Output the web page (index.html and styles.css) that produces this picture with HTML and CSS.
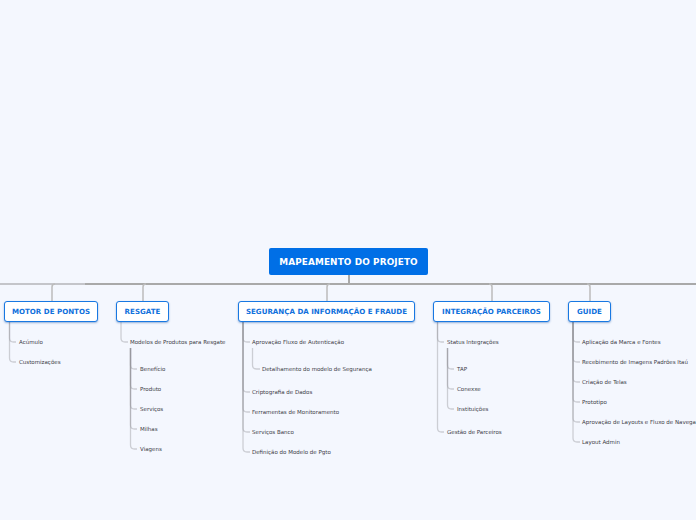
FILE: index.html
```html
<!DOCTYPE html>
<html lang="pt">
<head>
<meta charset="utf-8">
<title>Mapeamento do Projeto</title>
<link rel="stylesheet" href="styles.css">
</head>
<body>
<main class="map">
  <svg class="links" width="696" height="520" viewBox="0 0 696 520" fill="none" aria-hidden="true">
    <path class="trunk-edge" d="M0 284H696"/>
    <path class="trunk" d="M349 275V284M85 284H696"/>
    <g class="stem">
      <path d="M52 301V287Q52 284 55 284"/>
      <path d="M143 301V287Q143 284 146 284"/>
      <path d="M327 301V287Q327 284 330 284"/>
      <path d="M492 301V287Q492 284 489 284"/>
      <path d="M590 301V287Q590 284 587 284"/>
    </g>
    <g class="rail">
      <path d="M9.5 321V338Q9.5 342 13.5 342H16"/>
      <path d="M9.5 321V358Q9.5 362 13.5 362H16"/>

      <path d="M121 321V338Q121 342 125 342H128"/>
      <path d="M130.5 348V365Q130.5 369 134.5 369H137"/>
      <path d="M130.5 348V385Q130.5 389 134.5 389H137"/>
      <path d="M130.5 348V405Q130.5 409 134.5 409H137"/>
      <path d="M130.5 348V425Q130.5 429 134.5 429H137"/>
      <path d="M130.5 348V445Q130.5 449 134.5 449H137"/>

      <path d="M243 321V338Q243 342 247 342H250"/>
      <path d="M243 321V388Q243 392 247 392H250"/>
      <path d="M243 321V408Q243 412 247 412H250"/>
      <path d="M243 321V428Q243 432 247 432H250"/>
      <path d="M243 321V448Q243 452 247 452H250"/>
      <path d="M252.5 348V365Q252.5 369 256.5 369H260"/>

      <path d="M437.5 321V338Q437.5 342 441.5 342H444"/>
      <path d="M437.5 321V428Q437.5 432 441.5 432H444"/>
      <path d="M447.5 348V365Q447.5 369 451.5 369H454"/>
      <path d="M447.5 348V385Q447.5 389 451.5 389H454"/>
      <path d="M447.5 348V405Q447.5 409 451.5 409H454"/>

      <path d="M573 321V338Q573 342 577 342H580"/>
      <path d="M573 321V358Q573 362 577 362H580"/>
      <path d="M573 321V378Q573 382 577 382H580"/>
      <path d="M573 321V398Q573 402 577 402H580"/>
      <path d="M573 321V418Q573 422 577 422H580"/>
      <path d="M573 321V438Q573 442 577 442H580"/>
    </g>
  </svg>

  <h1 class="root">MAPEAMENTO DO PROJETO</h1>

  <div class="branches">
    <section class="branch b-motor">
      <h2 class="topic">MOTOR DE PONTOS</h2>
      <ul class="list">
        <li>Acúmulo</li>
        <li>Customizações</li>
      </ul>
    </section>
    <section class="branch b-resgate">
      <h2 class="topic">RESGATE</h2>
      <ul class="list">
        <li>Modelos de Produtos para Resgate
          <ul class="sub">
            <li>Benefício</li>
            <li>Produto</li>
            <li>Serviços</li>
            <li>Milhas</li>
            <li>Viagens</li>
          </ul>
        </li>
      </ul>
    </section>
    <section class="branch b-seg">
      <h2 class="topic">SEGURANÇA DA INFORMAÇÃO E FRAUDE</h2>
      <ul class="list">
        <li>Aprovação Fluxo de Autenticação
          <ul class="sub">
            <li>Detalhamento do modelo de Segurança</li>
          </ul>
        </li>
        <li>Criptografia de Dados</li>
        <li>Ferramentas de Monitoramento</li>
        <li>Serviços Banco</li>
        <li>Definição do Modelo de Pgto</li>
      </ul>
    </section>
    <section class="branch b-int">
      <h2 class="topic">INTEGRAÇÃO PARCEIROS</h2>
      <ul class="list">
        <li>Status Integrações
          <ul class="sub">
            <li>TAP</li>
            <li>Conexxe</li>
            <li>Instituições</li>
          </ul>
        </li>
        <li>Gestão de Parceiros</li>
      </ul>
    </section>
    <section class="branch b-guide">
      <h2 class="topic">GUIDE</h2>
      <ul class="list">
        <li>Aplicação da Marca e Fontes</li>
        <li>Recebimento de Imagens Padrões Itaú</li>
        <li>Criação de Telas</li>
        <li>Prototipo</li>
        <li>Aprovação de Layouts e Fluxo de Navegação</li>
        <li>Layout Admin</li>
      </ul>
    </section>
  </div>
</main>
</body>
</html>
```

FILE: styles.css
```css
* {
  box-sizing: border-box;
}

html,
body {
  margin: 0;
  height: 100%;
  overflow: hidden;
  background: #f4f7fe;
}

body {
  font-family: "DejaVu Sans", Verdana, sans-serif;
  color: #3c3c46;
}

.map {
  position: relative;
  width: 696px;
  height: 520px;
  overflow: hidden;
  padding-top: 248px;
}

.links {
  position: absolute;
  left: 0;
  top: 0;
}

.trunk-edge {
  stroke: #b4b4b8;
  stroke-width: 1.5;
}

.trunk {
  stroke: #a9a9a9;
  stroke-width: 2;
}

.stem path {
  stroke: #bcbcbc;
  stroke-width: 1.5;
}

.rail path {
  stroke: rgba(145, 145, 150, 0.4);
  stroke-width: 1.3;
}

.root {
  position: relative;
  margin: 0 0 0 269px;
  width: 159px;
  height: 27px;
  padding-top: 1px;
  display: flex;
  align-items: center;
  justify-content: center;
  background: #006fe6;
  border-radius: 2px;
  color: #fff;
  font-size: 8.9px;
  font-weight: 700;
  letter-spacing: 0.12px;
  white-space: nowrap;
}

.branches {
  position: relative;
  display: flex;
  margin-top: 26px;
  padding-left: 4px;
}

.branch {
  flex: none;
  white-space: nowrap;
}

.b-motor { width: 112px; }
.b-resgate { width: 122px; }
.b-seg { width: 195px; }
.b-int { width: 135px; }
.b-guide { width: 130px; }

.topic {
  display: block;
  margin: 0;
  height: 21px;
  line-height: 19px;
  text-align: center;
  background: #fff;
  border: 1.5px solid #1878e2;
  border-radius: 3px;
  box-shadow: 0 1px 2px rgba(30, 90, 170, 0.45);
  color: #0f70dc;
  font-size: 7.08px;
  font-weight: 700;
}

.b-motor .topic { width: 94px; }
.b-resgate .topic { width: 53px; }
.b-seg .topic { width: 177px; }
.b-int .topic { width: 117px; }
.b-guide .topic { width: 43px; }

.list,
.sub {
  list-style: none;
  margin: 0;
  padding: 0;
  font-size: 5.5px;
  line-height: 20px;
}

.list {
  margin-top: 10px;
  padding-left: 14px;
}

.b-motor .list {
  padding-left: 15px;
}

.sub {
  margin: 7px 0 3px;
  padding-left: 10px;
}
```
